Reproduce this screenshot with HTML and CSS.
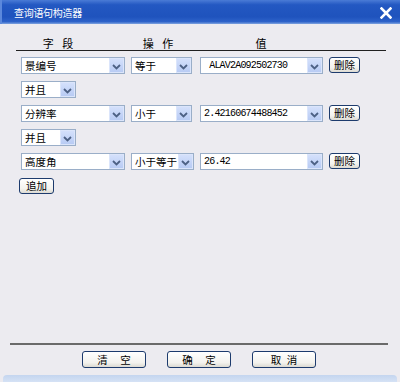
FILE: index.html
```html
<!DOCTYPE html>
<html lang="zh-CN">
<head>
    <meta charset="UTF-8">
    <meta name="viewport" content="width=device-width, initial-scale=1.0">
    <title>查询语句构造器</title>
    <link rel="stylesheet" href="styles.css">
</head>
<body>
    <div class="window">
        <div class="titlebar">
            <span class="title">查询语句构造器</span>
            <svg class="close" width="12" height="12" viewBox="0 0 12 12">
                <path d="M1.5 1.5 L10.5 10.5 M10.5 1.5 L1.5 10.5" stroke="#fff" stroke-width="2.6" stroke-linecap="square"/>
            </svg>
        </div>

        <div class="content">
            <div class="head">
                <span class="h-field">字 段</span>
                <span class="h-op">操 作</span>
                <span class="h-val">值</span>
            </div>

            <div class="rows">
                <div class="row">
                    <div class="combo c-field"><span>景编号</span><i class="arrow"></i></div>
                    <div class="combo c-op"><span>等于</span><i class="arrow"></i></div>
                    <div class="combo c-val"><span class="mono">&nbsp;ALAV2A092502730</span><i class="arrow"></i></div>
                    <button class="btn-del">删除</button>
                </div>
                <div class="row">
                    <div class="combo c-and"><span>并且</span><i class="arrow"></i></div>
                </div>
                <div class="row">
                    <div class="combo c-field"><span>分辨率</span><i class="arrow"></i></div>
                    <div class="combo c-op"><span>小于</span><i class="arrow"></i></div>
                    <div class="combo c-val"><span class="mono">2.42160674488452</span><i class="arrow"></i></div>
                    <button class="btn-del">删除</button>
                </div>
                <div class="row">
                    <div class="combo c-and"><span>并且</span><i class="arrow"></i></div>
                </div>
                <div class="row">
                    <div class="combo c-field"><span>高度角</span><i class="arrow"></i></div>
                    <div class="combo c-op wide"><span>小于等于</span><i class="arrow"></i></div>
                    <div class="combo c-val"><span class="mono">26.42</span><i class="arrow"></i></div>
                    <button class="btn-del">删除</button>
                </div>
                <div class="row">
                    <button class="btn-add">追加</button>
                </div>
            </div>
        </div>

        <div class="footer">
            <button class="btn-foot">清 空</button>
            <button class="btn-foot">确 定</button>
            <button class="btn-foot narrow">取 消</button>
        </div>
        <div class="frame-bottom"></div>
    </div>
</body>
</html>
```

FILE: styles.css
```css
/* 对话框整体 */
body {
    margin: 0;
    background-color: #ecebf0;
    font-family: "Noto Sans CJK SC", "DejaVu Sans", sans-serif;
    font-size: 10.5px;
    color: #000;
}

.window {
    width: 400px;
    height: 382px;
    display: flex;
    flex-direction: column;
    background-color: #ecebf0;
    overflow: hidden;
}

.titlebar {
    height: 24px;
    flex: none;
    display: flex;
    align-items: center;
    justify-content: space-between;
    padding: 0 8px 0 12px;
    background: linear-gradient(to bottom, #4a7bd6 0%, #2358c2 20%, #1f53bd 70%, #2d62c9 90%, #7fa4e0 100%);
    border-left: 2px solid #5b88dc;
    box-sizing: border-box;
}

.title {
    color: #fff;
    font-size: 10px;
    letter-spacing: -0.3px;
}

.close {
    display: block;
    margin-top: 1px;
}

.content {
    flex: 1;
    padding: 0 14px 0 16px;
}

.head {
    display: flex;
    height: 27px;
    box-sizing: border-box;
    padding-top: 12px;
    line-height: 14px;
    border-bottom: 1px solid #202020;
    font-size: 11px;
}

.head span {
    text-align: center;
    white-space: pre;
    word-spacing: 6px;
}

.h-field { width: 84px; }
.h-op { width: 116px; }
.h-val { width: 90px; }

.rows {
    display: flex;
    flex-direction: column;
    gap: 7px;
    padding: 6px 0 0 5px;
}

.row {
    display: flex;
    align-items: center;
    height: 17px;
}

/* 下拉框 */
.combo {
    height: 17px;
    box-sizing: border-box;
    border: 1px solid #9aaec8;
    background-color: #fff;
    display: flex;
    align-items: center;
    justify-content: space-between;
    padding-left: 3px;
    white-space: nowrap;
}

.combo span {
    line-height: 15px;
}

.c-field { width: 104px; margin-right: 6px; }
.c-op { width: 61px; margin-right: 8px; }
.c-op.wide { width: 63px; margin-right: 6px; }
.c-val { width: 123px; margin-right: 6px; }
.c-and { width: 55px; }

.mono {
    font-family: "Liberation Mono", monospace;
    font-size: 10px;
    letter-spacing: -0.8px;
}

.arrow {
    width: 15px;
    height: 15px;
    flex: none;
    box-sizing: border-box;
    border: 1px solid #dbe5fb;
    background:
        url("data:image/svg+xml;utf8,<svg xmlns='http://www.w3.org/2000/svg' width='9' height='6'><path d='M1 1 L4.5 4.5 L8 1' fill='none' stroke='%234d6185' stroke-width='1.8'/></svg>") center 5px no-repeat,
        linear-gradient(to bottom, #d4e0fb, #b8cbf4);
}

/* 按钮 */
button {
    font-family: "Noto Sans CJK SC", "DejaVu Sans", sans-serif;
    font-size: 10.5px;
    color: #000;
    height: 17px;
    padding: 0;
    line-height: 14px;
    border: 1px solid #1d3b6d;
    border-radius: 3px;
    background: linear-gradient(to bottom, #ffffff 0%, #f3f2ee 70%, #dcdad2 100%);
    cursor: pointer;
}

.btn-del {
    width: 31px;
    height: 16px;
    margin-top: -1px;
}

.btn-add {
    width: 35px;
    height: 16px;
    margin-left: -2px;
}

.footer {
    flex: none;
    display: flex;
    justify-content: center;
    gap: 21px;
    margin: 0 12px 0 10px;
    padding: 6px 0 7px;
    border-top: 2px solid #6a6a6a;
}

.btn-foot {
    width: 64px;
    white-space: pre;
    word-spacing: 10px;
}

.btn-foot.narrow {
    word-spacing: 3px;
}

.frame-bottom {
    flex: none;
    height: 7px;
    margin: 0 3px;
    border-radius: 4px 4px 0 0;
    background: linear-gradient(to bottom, #c4d5ef, #d5e2f5);
}
```
